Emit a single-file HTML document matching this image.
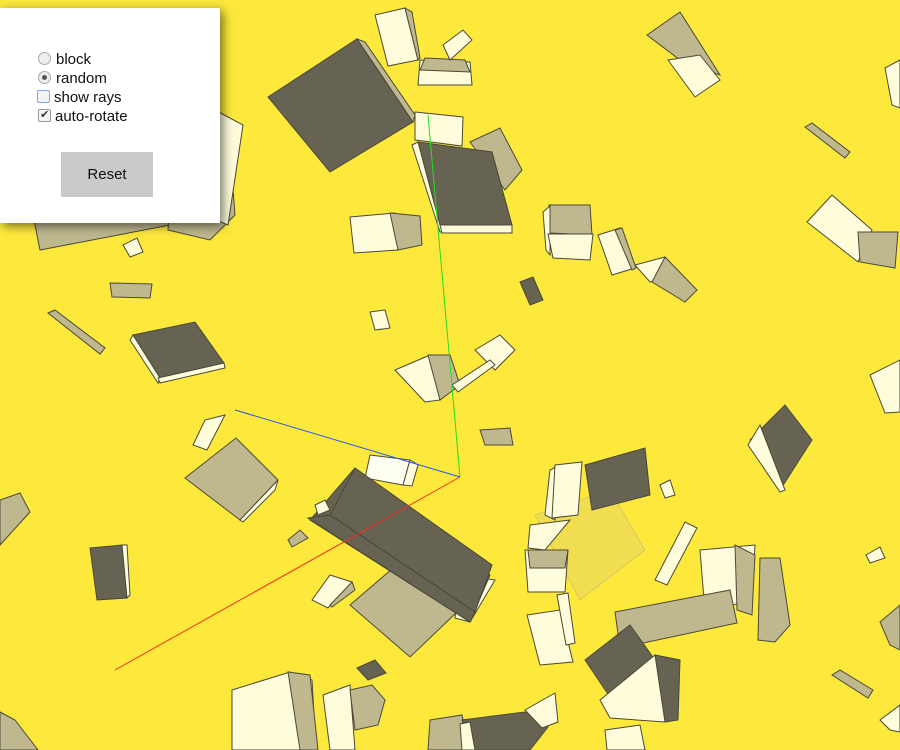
<!DOCTYPE html>
<html><head><meta charset="utf-8"><style>
html,body{margin:0;padding:0;width:900px;height:750px;overflow:hidden;background:#fde93b;font-family:"Liberation Sans",sans-serif}
svg{position:absolute;left:0;top:0}
.d{fill:#676352;stroke:#4a4838;stroke-width:1}
.l{fill:#fffcdc;stroke:#4a4838;stroke-width:1}
.m{fill:#bfb88f;stroke:#4a4838;stroke-width:1}
.w{fill:#fffef2;stroke:#4a4838;stroke-width:1}
#panel{position:absolute;left:0;top:8px;width:220px;height:215px;background:#fff;box-shadow:3px 3px 10px rgba(0,0,0,.55)}
.row{position:absolute;left:38px;font-size:15px;color:#111;line-height:19px;height:19px}
.rad{display:inline-block;width:11px;height:11px;border:1px solid #aaa;border-radius:50%;background:#eee;vertical-align:-1px;margin-right:5px;position:relative}
.chk{display:inline-block;width:11px;height:11px;border:1px solid #999;border-radius:2px;background:#f4f4f4;vertical-align:-1px;margin-right:4px;position:relative}
#btn{position:absolute;left:61px;top:144px;width:92px;height:45px;background:#cacaca;font-size:15px;text-align:center;line-height:45px;color:#111}
</style></head><body>
<svg width="900" height="750" viewBox="0 0 900 750">
<!-- top-left area behind panel -->
<polygon class="m" points="30,200 140,195 170,225 40,250"/>
<polygon class="m" points="170,200 230,150 235,215 210,240 168,230"/>
<polygon class="l" points="215,110 243,125 228,225 205,215"/>
<!-- top center boxes -->
<polygon class="l" points="375,15 405,8 418,60 388,66"/>
<polygon class="m" points="405,8 412,12 420,58 418,60"/>
<polygon class="l" points="420,60 470,62 472,85 418,85"/>
<polygon class="m" points="425,58 465,60 470,72 420,70"/>
<polygon class="l" points="443,45 463,30 472,40 450,60"/>
<polygon class="d" points="268,97 357,39 413,122 330,172"/>
<polygon class="m" points="357,39 365,42 415,115 413,122"/>
<polygon class="l" points="415,112 463,117 462,146 415,140"/>
<polygon class="m" points="470,142 500,128 522,170 505,190"/>
<polygon class="d" points="418,142 492,152 512,225 440,225"/>
<polygon class="l" points="412,145 418,142 440,225 445,232 440,232"/>
<polygon class="l" points="440,225 512,225 512,233 442,233"/>
<polygon class="l" points="350,217 395,213 398,250 354,253"/>
<polygon class="m" points="390,213 420,216 422,245 398,250"/>
<!-- right top -->
<polygon class="m" points="647,35 680,12 720,75 680,60"/>
<polygon class="l" points="668,60 700,55 720,80 695,97"/>
<polygon class="l" points="885,68 900,60 900,108 892,105"/>
<polygon class="m" points="805,127 812,123 850,152 845,158"/>
<polygon class="l" points="807,222 832,195 872,230 858,262"/>
<polygon class="m" points="858,232 898,232 895,268 860,262"/>
<polygon class="m" points="549,205 590,205 592,235 550,233"/>
<polygon class="l" points="543,212 550,206 550,255 546,250"/>
<polygon class="l" points="548,234 593,234 590,260 553,258"/>
<polygon class="l" points="598,235 620,228 635,268 612,275"/>
<polygon class="m" points="615,230 622,228 636,268 632,270"/>
<polygon class="l" points="635,265 665,257 680,275 650,282"/>
<polygon class="m" points="665,257 697,290 685,302 652,282"/>
<polygon class="d" points="520,282 533,277 543,300 530,305"/>
<!-- left mid -->
<polygon class="l" points="123,245 137,238 143,252 130,257"/>
<polygon class="m" points="110,283 152,284 150,298 112,297"/>
<polygon class="m" points="48,313 55,310 105,348 100,354"/>
<polygon class="d" points="133,335 195,322 224,363 160,378"/>
<polygon class="l" points="130,340 133,335 160,378 158,383"/>
<polygon class="l" points="158,378 224,363 225,368 160,383"/>
<polygon class="l" points="193,445 205,420 225,415 207,450"/>
<polygon class="m" points="185,478 236,438 278,480 240,520"/>
<polygon class="l" points="240,520 278,480 275,490 243,522"/>
<polygon class="m" points="0,500 20,493 30,512 0,545"/>
<polygon class="d" points="90,548 122,545 127,598 97,600"/>
<polygon class="l" points="122,545 127,545 130,595 127,598"/>
<!-- center cluster -->
<polygon class="l" points="370,312 385,310 390,328 375,330"/>
<polygon class="l" points="395,370 430,355 440,400 425,402"/>
<polygon class="m" points="428,355 450,355 460,385 440,400"/>
<polygon class="l" points="475,350 500,335 515,350 495,370"/>
<polygon class="l" points="452,385 490,360 495,365 458,392"/>
<polygon class="m" points="480,430 510,428 513,445 485,445"/>
<polygon class="w" points="370,455 410,460 403,485 365,478"/>
<polygon class="l" points="410,460 418,465 412,486 403,485"/>
<!-- big dark box -->
<polygon class="m" points="350,605 420,545 480,590 410,657"/>
<polygon class="l" points="460,575 495,580 470,622 455,618"/>
<polygon class="d" points="355,468 490,575 470,622 310,520"/>
<polygon class="d" points="355,468 492,565 475,612 330,515"/>
<polygon class="d" points="308,518 330,515 475,612 470,622"/>
<polygon class="l" points="315,505 325,500 330,510 318,515"/>
<polygon class="m" points="288,540 300,530 308,538 292,547"/>
<polygon class="l" points="312,600 330,575 352,582 328,608"/>
<polygon class="m" points="330,605 352,582 355,590 332,607"/>
<polygon class="d" points="357,668 375,660 386,673 368,680"/>
<!-- ghost box -->
<polygon points="535,515 610,490 645,550 580,600" fill="#e9d85a" fill-opacity=".7" stroke="#d8c860"/>
<!-- right mid -->
<polygon class="l" points="550,470 560,465 555,520 545,515"/>
<polygon class="l" points="555,465 582,462 578,515 552,518"/>
<polygon class="d" points="585,465 645,448 650,495 592,510"/>
<polygon class="l" points="660,485 670,480 675,495 665,498"/>
<polygon class="d" points="750,440 785,405 812,440 780,490"/>
<polygon class="l" points="748,445 760,425 785,490 780,492"/>
<polygon class="l" points="870,375 900,360 900,412 885,413"/>
<polygon class="l" points="655,580 685,522 697,528 667,585"/>
<polygon class="l" points="525,550 568,550 565,592 528,592"/>
<polygon class="m" points="528,550 568,550 565,568 530,568"/>
<polygon class="l" points="530,525 570,520 545,550 528,548"/>
<polygon class="l" points="527,615 560,610 573,662 540,665"/>
<polygon class="l" points="557,595 568,593 575,643 566,645"/>
<polygon class="l" points="700,550 755,545 752,600 705,612"/>
<polygon class="m" points="735,545 755,555 752,615 737,610"/>
<polygon class="m" points="760,558 780,558 790,625 775,642 758,640"/>
<polygon class="m" points="615,612 730,590 737,623 620,648"/>
<polygon class="d" points="585,660 630,625 655,660 612,700"/>
<polygon class="l" points="600,700 655,655 680,660 665,722 610,718"/>
<polygon class="d" points="655,655 680,660 678,720 665,722"/>
<polygon class="l" points="866,555 880,547 885,558 870,563"/>
<polygon class="m" points="880,622 900,605 900,650 890,645"/>
<polygon class="m" points="832,675 840,670 873,690 868,698"/>
<polygon class="l" points="880,720 900,705 900,732 890,730"/>
<!-- bottom -->
<polygon class="l" points="232,690 290,672 312,680 316,750 232,750"/>
<polygon class="m" points="288,672 310,675 318,750 300,750"/>
<polygon class="l" points="323,695 350,685 355,750 330,750"/>
<polygon class="m" points="350,690 372,685 385,700 378,725 355,730"/>
<polygon class="m" points="0,712 15,720 38,750 0,750"/>
<polygon class="m" points="430,720 462,715 470,750 428,750"/>
<polygon class="d" points="462,720 525,712 548,727 530,750 470,750"/>
<polygon class="l" points="460,724 470,722 475,750 462,750"/>
<polygon class="l" points="525,710 555,693 558,722 542,728"/>
<polygon class="l" points="605,730 640,725 645,750 607,750"/>
<!-- axes -->
<line x1="428" y1="115" x2="460" y2="477" stroke="#22e022" stroke-width="1"/>
<line x1="235" y1="410" x2="460" y2="477" stroke="#2255ee" stroke-width="1"/>
<line x1="460" y1="477" x2="115" y2="670" stroke="#ee3322" stroke-width="1"/>
</svg>
<div id="panel">
 <div class="row" style="top:42px"><span class="rad"></span>block</div>
 <div class="row" style="top:61px"><span class="rad"><span style="position:absolute;left:3px;top:3px;width:5px;height:5px;border-radius:50%;background:#555"></span></span>random</div>
 <div class="row" style="top:80px;left:37px"><span class="chk" style="border:1.5px solid #7aa7ee"></span>show rays</div>
 <div class="row" style="top:99px"><span class="chk"><span style="position:absolute;left:1px;top:-4px;font-size:11px;color:#333">✔</span></span>auto-rotate</div>
 <div id="btn">Reset</div>
</div>
</body></html>
